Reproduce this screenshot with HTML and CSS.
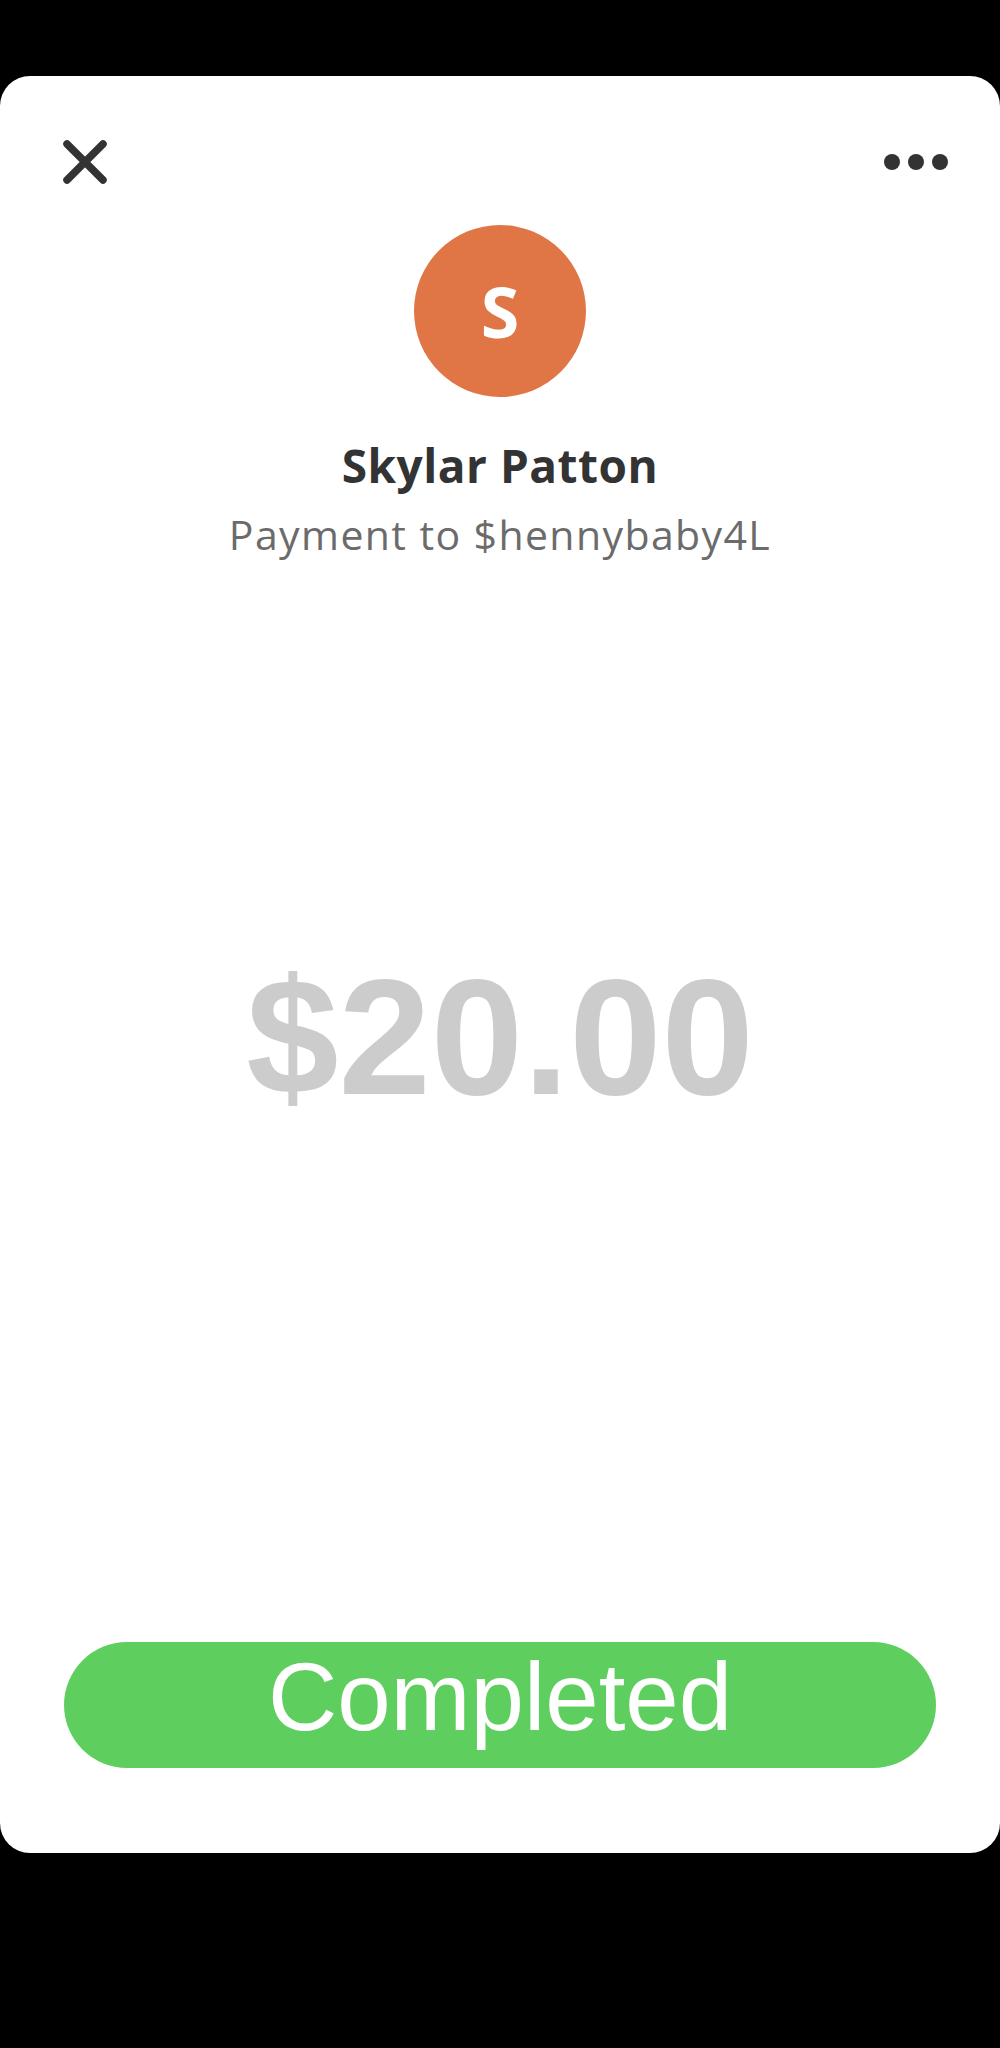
FILE: index.html
```html
<!DOCTYPE html>
<html lang="en">

<head>
    <meta charset="UTF-8">
    <meta name="viewport" content="width=device-width, initial-scale=1.0">
    <title>Payment</title>
    <link rel="stylesheet" href="styles.css">
</head>

<body>

    <div class="card">
        <div class="topbar">
            <button class="icon-btn" aria-label="Close">
                <svg width="46" height="46" viewBox="0 0 46 46">
                    <path d="M5 5 L41 41 M41 5 L5 41" stroke="#333" stroke-width="7.5" stroke-linecap="round" fill="none" />
                </svg>
            </button>
            <button class="icon-btn dots" aria-label="More">
                <span></span><span></span><span></span>
            </button>
        </div>

        <div class="avatar">S</div>
        <div class="name">Skylar Patton</div>
        <div class="subtitle">Payment to $hennybaby4L</div>

        <div class="amount">$20.00</div>

        <div class="spacer"></div>

        <button class="status">Completed</button>
    </div>

</body>

</html>
```

FILE: styles.css
```css
body {
    margin: 0;
    padding: 0;
    background-color: #000;
    font-family: "Open Sans", "Liberation Sans", sans-serif;
    color: #333;
}

.card {
    margin-top: 76px;
    height: 1777px;
    background-color: #fff;
    border-radius: 30px;
    display: flex;
    flex-direction: column;
    align-items: center;
    box-sizing: border-box;
    padding-bottom: 85px;
}

.topbar {
    align-self: stretch;
    display: flex;
    justify-content: space-between;
    align-items: center;
    height: 60px;
    margin-top: 56px;
    padding: 0 52px 0 62px;
}

.icon-btn {
    background: none;
    border: none;
    padding: 0;
    margin: 0;
    display: flex;
    align-items: center;
    cursor: pointer;
}

.dots {
    gap: 8px;
}

.dots span {
    width: 16px;
    height: 16px;
    border-radius: 50%;
    background-color: #333;
}

.avatar {
    margin-top: 33px;
    width: 172px;
    height: 172px;
    border-radius: 50%;
    background-color: #e07646;
    color: #fff;
    font-size: 70px;
    font-weight: 700;
    display: flex;
    align-items: center;
    justify-content: center;
}

.name {
    margin-top: 38px;
    font-size: 46px;
    font-weight: 700;
    line-height: 60px;
    letter-spacing: 0.5px;
    color: #333;
}

.subtitle {
    margin-top: 14px;
    font-size: 41px;
    line-height: 50px;
    letter-spacing: 1.4px;
    color: #6b6b6b;
}

.amount {
    margin-top: 383px;
    font-family: "Liberation Sans", Arial, sans-serif;
    font-size: 166px;
    font-weight: 700;
    line-height: 190px;
    color: #cccccc;
}

.spacer {
    flex: 1;
}

.status {
    width: 872px;
    height: 126px;
    border: none;
    border-radius: 63px;
    background-color: #5ecf5e;
    color: #fff;
    font-family: "Liberation Sans", Arial, sans-serif;
    font-size: 96px;
    line-height: 1;
    padding: 0 0 16px 0;
    cursor: pointer;
}
```
